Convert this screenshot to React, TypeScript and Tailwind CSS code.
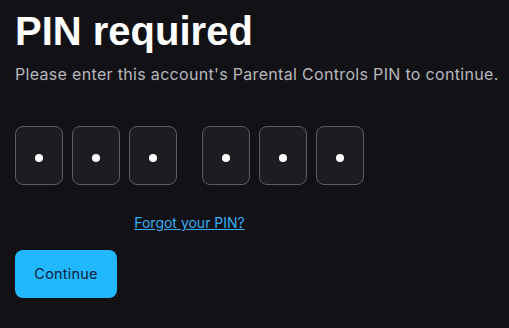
export default function App() {
  const digits = [0, 1, 2]

  const Box = () => (
    <div className="w-[48px] h-[59px] rounded-[8px] border border-[#5c5c62] bg-[#1c1c21] flex items-center justify-center pt-[5px]">
      <span className="block w-[8px] h-[8px] rounded-full bg-white" />
    </div>
  )

  return (
    <div className="min-h-[328px] w-full bg-[#111116] px-[15px] pt-[7px] font-['Inter','Noto_Sans',sans-serif]">
      <h1 className="text-[40px] leading-[48px] font-bold text-white font-['Liberation_Sans',Arial,sans-serif]">
        PIN required
      </h1>
      <p className="mt-[9px] whitespace-nowrap text-[16px] leading-[20px] tracking-[0.32px] text-[#b8b8bb]">
        Please enter this account's Parental Controls PIN to continue.
      </p>

      <div className="mt-[42px] flex gap-[25px] w-fit">
        <div className="flex gap-[9px]">
          {digits.map((d) => (
            <Box key={d} />
          ))}
        </div>
        <div className="flex gap-[9px]">
          {digits.map((d) => (
            <Box key={d} />
          ))}
        </div>
      </div>

      <div className="w-[349px] flex justify-center mt-[29px]">
        <a href="#" className="text-[14px] leading-[17px] text-[#3aaef2] underline">
          Forgot your PIN?
        </a>
      </div>

      <button className="mt-[19px] w-[102px] h-[48px] rounded-[8px] bg-[#22b8ff] text-[14.5px] font-normal tracking-[0.2px] text-[#10203a]">
        Continue
      </button>
    </div>
  )
}
